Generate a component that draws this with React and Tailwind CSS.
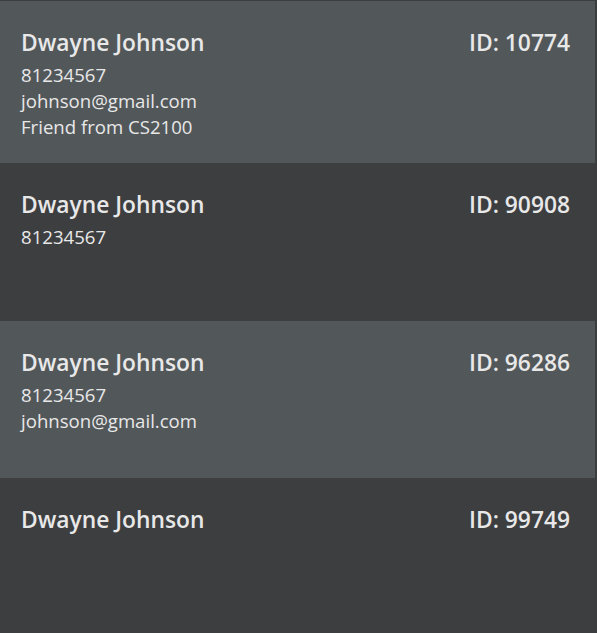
export default function App() {
  const rows = [
    { id: "10774", lines: ["81234567", "johnson@gmail.com", "Friend from CS2100"], light: true, h: "h-[162px]" },
    { id: "90908", lines: ["81234567"], light: false, h: "h-[158px]" },
    { id: "96286", lines: ["81234567", "johnson@gmail.com"], light: true, h: "h-[157px]" },
    { id: "99749", lines: [], light: false, h: "h-[160px]" },
  ];
  return (
    <div className="w-[597px] h-[633px] overflow-hidden bg-[#3c3d3f] pt-px" style={{ fontFamily: '"Open Sans", "Noto Sans", sans-serif' }}>
      <div className="w-[595px] flex flex-col">
        {rows.map((r) => (
          <div key={r.id} className={`${r.h} ${r.light ? "bg-[#52575a]" : "bg-[#3d3e40]"} pl-[21px] pr-[25px] pt-[23px] text-[#e8e8e8]`}>
            <div className="flex justify-between items-center">
              <div className="text-[22.8px] font-semibold leading-[38px]">Dwayne Johnson</div>
              <div className="text-[22.8px] font-semibold leading-[38px]">ID: {r.id}</div>
            </div>
            <div className="flex flex-col">
              {r.lines.map((l, i) => (
                <div key={i} className="text-[18.6px] leading-[26px]">{l}</div>
              ))}
            </div>
          </div>
        ))}
      </div>
    </div>
  );
}
